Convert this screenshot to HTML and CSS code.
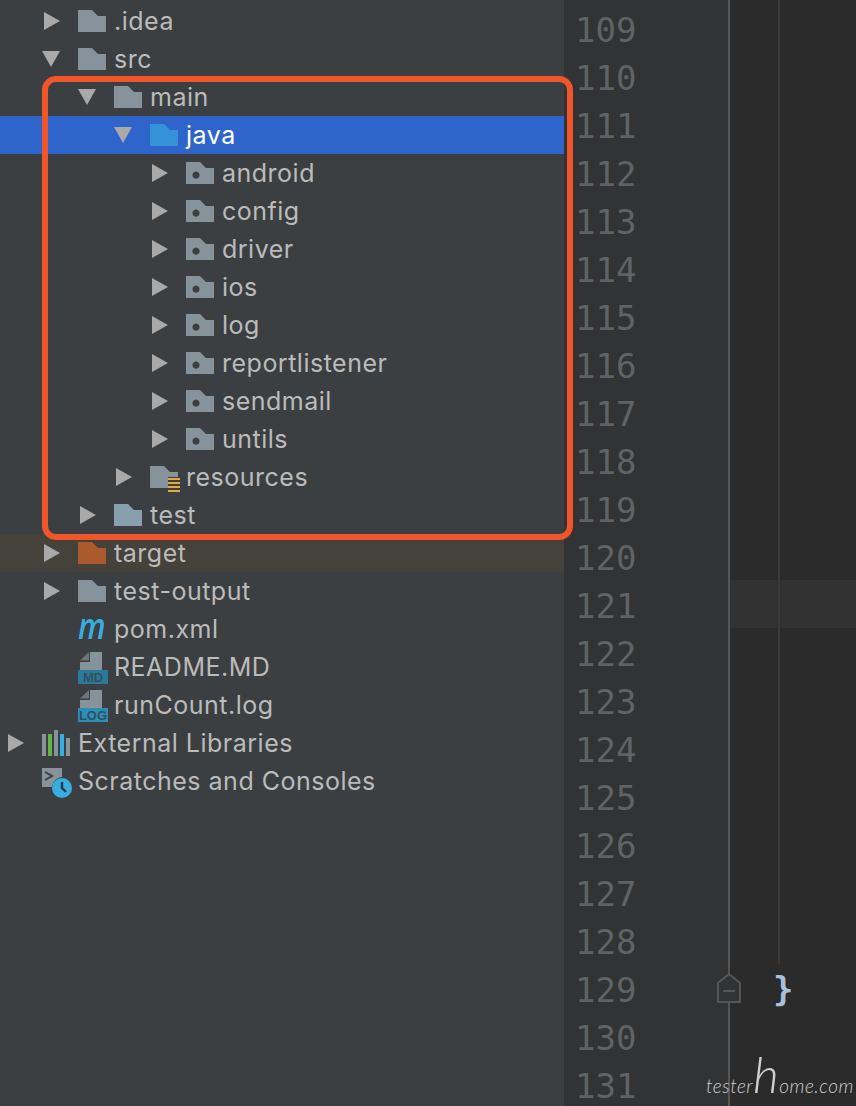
FILE: index.html
```html
<!DOCTYPE html>
<html lang="en">
<head>
<meta charset="utf-8">
<title>Project tree</title>
<link rel="stylesheet" href="styles.css">
</head>
<body>
<svg class="sprite" width="0" height="0" aria-hidden="true">
  <symbol id="folder" viewBox="0 0 28 22"><path d="M0 0H14L20 6H28V22H0Z"/></symbol>
  <symbol id="pkg" viewBox="0 0 28 22"><path fill-rule="evenodd" d="M0 0H14L20 6H28V22H0ZM10 9.5a3.6 3.6 0 1 0 .01 0Z"/></symbol>
  <symbol id="right" viewBox="0 0 16 18"><path d="M0 0L16 9L0 18Z"/></symbol>
  <symbol id="down" viewBox="0 0 18 16"><path d="M0 0H18L9 16Z"/></symbol>
</svg>
<div class="ide">
  <aside class="tree">
    <div class="row lv1"><svg class="arrow ar"><use href="#right"/></svg><svg class="ic folder"><use href="#folder"/></svg><span>.idea</span></div>
    <div class="row lv1"><svg class="arrow ad"><use href="#down"/></svg><svg class="ic folder"><use href="#folder"/></svg><span>src</span></div>
    <div class="row lv2"><svg class="arrow ad"><use href="#down"/></svg><svg class="ic folder"><use href="#folder"/></svg><span>main</span></div>
    <div class="row lv3 selected"><svg class="arrow ad"><use href="#down"/></svg><svg class="ic folder-blue"><use href="#folder"/></svg><span>java</span></div>
    <div class="row lv4"><svg class="arrow ar"><use href="#right"/></svg><svg class="ic folder"><use href="#pkg"/></svg><span>android</span></div>
    <div class="row lv4"><svg class="arrow ar"><use href="#right"/></svg><svg class="ic folder"><use href="#pkg"/></svg><span>config</span></div>
    <div class="row lv4"><svg class="arrow ar"><use href="#right"/></svg><svg class="ic folder"><use href="#pkg"/></svg><span>driver</span></div>
    <div class="row lv4"><svg class="arrow ar"><use href="#right"/></svg><svg class="ic folder"><use href="#pkg"/></svg><span>ios</span></div>
    <div class="row lv4"><svg class="arrow ar"><use href="#right"/></svg><svg class="ic folder"><use href="#pkg"/></svg><span>log</span></div>
    <div class="row lv4"><svg class="arrow ar"><use href="#right"/></svg><svg class="ic folder"><use href="#pkg"/></svg><span>reportlistener</span></div>
    <div class="row lv4"><svg class="arrow ar"><use href="#right"/></svg><svg class="ic folder"><use href="#pkg"/></svg><span>sendmail</span></div>
    <div class="row lv4"><svg class="arrow ar"><use href="#right"/></svg><svg class="ic folder"><use href="#pkg"/></svg><span>untils</span></div>
    <div class="row lv3"><svg class="arrow ar"><use href="#right"/></svg>
      <svg class="ic ic-res" viewBox="0 0 30 26"><path class="f-gray" d="M0 0H14L20 6H28V11H18V22H0Z"/><path class="f-yellow" d="M18 12h12v2H18zM18 16h12v2H18zM18 20h12v2H18zM18 24h12v2H18z"/></svg><span>resources</span></div>
    <div class="row lv2"><svg class="arrow ar"><use href="#right"/></svg><svg class="ic folder-test"><use href="#folder"/></svg><span>test</span></div>
    <div class="row lv1 excluded"><svg class="arrow ar"><use href="#right"/></svg><svg class="ic folder-orange"><use href="#folder"/></svg><span>target</span></div>
    <div class="row lv1"><svg class="arrow ar"><use href="#right"/></svg><svg class="ic folder"><use href="#folder"/></svg><span>test-output</span></div>
    <div class="row lv1"><span class="arrow"></span><svg class="ic" viewBox="0 0 28 22"><text class="maven" x="0" y="21" textLength="28" lengthAdjust="spacingAndGlyphs">m</text></svg><span>pom.xml</span></div>
    <div class="row lv1"><span class="arrow"></span>
      <svg class="ic ic-file" viewBox="0 0 30 32"><path class="f-gray" d="M12 0H24V18H2V10H12Z"/><path class="f-dim" d="M2 8.5L11 0V8.5Z"/><rect class="tag-md" x="0" y="18" width="30" height="14"/><text class="tag-text" x="15" y="30">MD</text></svg><span>README.MD</span></div>
    <div class="row lv1"><span class="arrow"></span>
      <svg class="ic ic-file" viewBox="0 0 30 32"><path class="f-gray" d="M12 0H24V18H2V10H12Z"/><path class="f-dim" d="M2 8.5L11 0V8.5Z"/><rect class="tag-log" x="0" y="18" width="30" height="14"/><text class="tag-text" x="15" y="30">LOG</text></svg><span>runCount.log</span></div>
    <div class="row lv0"><svg class="arrow ar"><use href="#right"/></svg>
      <svg class="ic ic-libs" viewBox="0 0 28 26"><rect class="f-gray" x="0" y="4" width="4" height="22"/><rect class="f-green" x="6" y="4" width="4" height="22"/><rect class="f-gray" x="12" y="0" width="4" height="26"/><rect class="f-sky" x="18" y="4" width="4" height="22"/><rect class="f-gray" x="24" y="8" width="4" height="18"/></svg><span>External Libraries</span></div>
    <div class="row lv0"><span class="arrow"></span>
      <svg class="ic ic-scratch" viewBox="0 0 30 30"><path class="f-gray" d="M0 0H20V9A11 11 0 0 0 10 19H0Z"/><path class="f-stroke" d="M3 4L10 8L3 12"/><circle class="f-sky" cx="20" cy="20" r="10"/><path class="f-clock" d="M20 14V20L24 24"/></svg><span>Scratches and Consoles</span></div>
  </aside>
  <div class="gutter">
    <div>109</div><div>110</div><div>111</div><div>112</div><div>113</div><div>114</div><div>115</div><div>116</div><div>117</div><div>118</div><div>119</div><div>120</div><div>121</div><div>122</div><div>123</div><div>124</div><div>125</div><div>126</div><div>127</div><div>128</div><div>129</div><div>130</div><div>131</div>
  </div>
  <main class="code">
    <div class="line"></div><div class="line"></div><div class="line"></div><div class="line"></div><div class="line"></div><div class="line"></div><div class="line"></div><div class="line"></div><div class="line"></div><div class="line"></div><div class="line"></div><div class="line"></div>
    <div class="line current"></div>
    <div class="line"></div><div class="line"></div><div class="line"></div><div class="line"></div><div class="line"></div><div class="line"></div><div class="line"></div>
    <div class="line brace">}</div>
    <div class="line"></div><div class="line"></div>
  </main>
  <div class="highlight-box"></div>
  <div class="indent-guide"></div>
  <svg class="fold" viewBox="0 0 24 30"><path d="M1 29V10L12 1L23 10V29Z"/><line x1="6" y1="18" x2="18" y2="18"/></svg>
  <div class="watermark">tester<span class="wm-tall">h</span>ome.com</div>
</div>
</body>
</html>
```
FILE: styles.css
```css
html, body {
  margin: 0;
  height: 1106px;
  overflow: hidden;
}
.sprite { position: absolute; }
.ide {
  position: relative;
  display: flex;
  height: 1106px;
  width: 856px;
  overflow: hidden;
  background: #2b2b2b;
}
.tree {
  width: 564px;
  flex: none;
  box-sizing: border-box;
  padding-top: 2px;
  background: #3c3f41;
  font-family: Inter, "Liberation Sans", sans-serif;
  font-size: 25px;
  letter-spacing: 0.5px;
  color: #bbbbbb;
}
.row {
  display: flex;
  align-items: center;
  height: 38px;
  white-space: nowrap;
}
.lv0 { padding-left: 8px; }
.lv1 { padding-left: 44px; }
.lv2 { padding-left: 80px; }
.lv3 { padding-left: 116px; }
.lv4 { padding-left: 152px; }
.selected { background: #2f65ca; color: #fff; }
.excluded { background: #45423c; }
.arrow {
  flex: none;
  width: 16px;
  height: 18px;
  margin-right: 18px;
  fill: #a9a9a9;
}
.arrow.ad { width: 18px; height: 16px; margin-left: -2px; }
.ic {
  flex: none;
  width: 28px;
  height: 22px;
  margin-right: 8px;
  overflow: visible;
  fill: #87939a;
}
.ic-res { width: 30px; height: 26px; margin: 4px 6px 0 0; }
.ic-file { width: 30px; height: 32px; margin: 2px 6px 0 0; }
.ic-libs { height: 26px; margin-right: 8px; }
.ic-scratch { width: 30px; height: 30px; margin: 4px 6px 0 0; }
.folder { fill: #87939a; }
.folder-blue { fill: #3592d8; }
.folder-test { fill: #88a0ad; }
.folder-orange { fill: #aa5a2c; }
.f-gray { fill: #87939a; }
.f-dim { fill: #6e7478; }
.f-yellow { fill: #e3a93c; }
.f-green { fill: #62b543; }
.f-sky { fill: #38aee0; }
.f-stroke { fill: none; stroke: #3c3f41; stroke-width: 2; }
.f-clock { fill: none; stroke: #2b3a44; stroke-width: 2.4; }
.maven {
  font: italic 600 36px "Open Sans", sans-serif;
  fill: #38aee0;
}
.tag-md { fill: #2a7a9c; }
.tag-log { fill: #2d8fb8; }
.tag-text {
  font: bold 13px "Liberation Sans", sans-serif;
  letter-spacing: 0;
  text-anchor: middle;
  fill: #33505f;
}
.gutter {
  width: 165px;
  flex: none;
  box-sizing: border-box;
  padding: 6px 0 0 11px;
  background: #313335;
  color: #606366;
  font-family: "DejaVu Sans Mono", monospace;
  font-size: 34px;
  line-height: 48px;
}
.code {
  flex: 1;
  padding-top: 4px;
  border-left: 2px solid #555555;
  margin-left: -1px;
}
.line {
  height: 48px;
  box-sizing: border-box;
  padding: 2px 0 0 43px;
  font-family: "DejaVu Sans Mono", monospace;
  font-size: 34px;
  line-height: 46px;
  color: #a9c0dc;
}
.current { background: #323232; }
.brace { font-weight: bold; }
.highlight-box {
  position: absolute;
  left: 42px;
  top: 76px;
  width: 531px;
  height: 464px;
  box-sizing: border-box;
  border: 6px solid #f1552a;
  border-radius: 14px;
}
.indent-guide {
  position: absolute;
  left: 778px;
  top: 0;
  width: 2px;
  height: 964px;
  background: #3a3a3a;
}
.fold {
  position: absolute;
  left: 717px;
  top: 973px;
  width: 24px;
  height: 30px;
  fill: #313335;
  stroke: #555555;
  stroke-width: 2;
}
.watermark {
  position: absolute;
  left: 706px;
  top: 1064px;
  font-family: Lato, sans-serif;
  font-style: italic;
  font-weight: 300;
  font-size: 19px;
  letter-spacing: 0.5px;
  white-space: nowrap;
  color: #d0d0d0;
  line-height: 40px;
}
.wm-tall { font-size: 50px; line-height: 20px; }
```
